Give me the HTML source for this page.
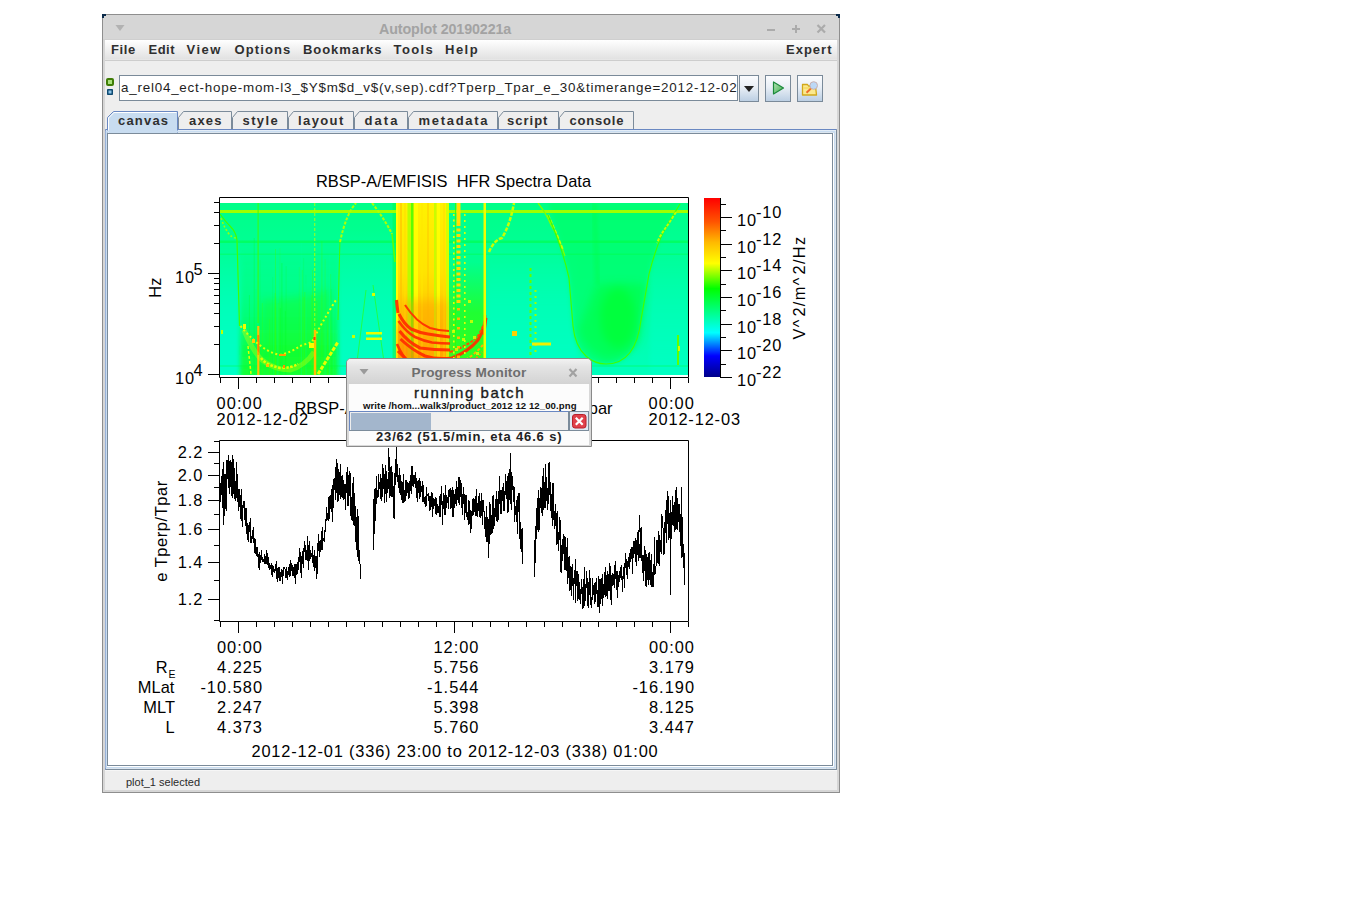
<!DOCTYPE html><html><head><meta charset="utf-8"><style>
*{box-sizing:border-box}
body{margin:0;width:1345px;height:916px;background:#fff;position:relative;overflow:hidden;font-family:"Liberation Sans",sans-serif}
.a{position:absolute}
.mt{position:absolute;top:40px;font-size:13px;font-weight:bold;color:#2f2f2f;line-height:19px;white-space:pre}
.tab{position:absolute;top:111px;height:19px}
.tt{position:absolute;top:113px;font-size:13px;font-weight:bold;color:#2f2f2f;line-height:16px;white-space:pre;text-align:center}
</style></head><body><div class="a" style="left:102px;top:14px;width:738px;height:779px;border:1px solid #8e8e8e;background:#d6d6d6"></div><div class="a" style="left:102px;top:14px;width:4px;height:2px;background:#0b2a4a"></div><div class="a" style="left:102px;top:14px;width:2px;height:4px;background:#0b2a4a"></div><div class="a" style="left:836px;top:14px;width:4px;height:2px;background:#0b2a4a"></div><div class="a" style="left:838px;top:14px;width:2px;height:4px;background:#0b2a4a"></div><div class="a" style="left:103px;top:39px;width:736px;height:1px;background:#cfcfcf"></div><div class="a" style="left:379px;top:20px;font-size:14.3px;font-weight:bold;color:#a3a3a3;letter-spacing:-0.12px;white-space:pre;line-height:18px">Autoplot 20190221a</div><svg class="a" style="left:0;top:0" width="1345" height="60"><path d="M115.5 25 L124.5 25 L120 31 Z" fill="#b2b2b2"/><rect x="767" y="29" width="8" height="2" fill="#ababab"/><rect x="792" y="28" width="8" height="2" fill="#ababab"/><rect x="795" y="25" width="2" height="8" fill="#ababab"/><path d="M817.5 25 L825 32.5 M825 25 L817.5 32.5" stroke="#ababab" stroke-width="2.2"/></svg><div class="a" style="left:105px;top:40px;width:732px;height:19px;background:linear-gradient(#ffffff,#f3f3f3 40%,#e2e2e2)"></div><div class="a" style="left:105px;top:59px;width:732px;height:1px;background:#e6e6e6"></div><div class="a" style="left:105px;top:60px;width:732px;height:1px;background:#cdcdcd"></div><div class="a" style="left:105px;top:61px;width:732px;height:729px;background:#eeeeee"></div><div class="mt" style="left:111px;letter-spacing:0.6px">File</div><div class="mt" style="left:148.5px;letter-spacing:0.5px">Edit</div><div class="mt" style="left:186.5px;letter-spacing:1.5px">View</div><div class="mt" style="left:234.5px;letter-spacing:1.1px">Options</div><div class="mt" style="left:303px;letter-spacing:0.95px">Bookmarks</div><div class="mt" style="left:393.5px;letter-spacing:1.4px">Tools</div><div class="mt" style="left:445px;letter-spacing:1.5px">Help</div><div class="mt" style="left:786px;letter-spacing:1.0px">Expert</div><svg class="a" style="left:0;top:60px" width="900" height="50"><rect x="106" y="18" width="8" height="8" rx="2" fill="#3f7d06"/><rect x="108" y="20" width="4" height="4" fill="#a8e07a"/><rect x="107" y="29" width="6" height="6" rx="0.8" fill="#0e4a72"/><rect x="108.5" y="30.5" width="3" height="3" fill="#8cc4e8"/></svg><div class="a" style="left:119px;top:75px;width:619px;height:26px;border:1px solid #7a8a99;background:#fff;overflow:hidden"><div class="a" style="left:1px;top:4px;font-size:13.4px;color:#1e1e1e;letter-spacing:0.78px;white-space:pre;line-height:16px">a_rel04_ect-hope-mom-l3_$Y$m$d_v$(v,sep).cdf?Tperp_Tpar_e_30&amp;timerange=2012-12-02</div></div><div class="a" style="left:739px;top:75px;width:20px;height:27px;border:1px solid #7a8a99;background:linear-gradient(#fbfcfe,#e9eff6 45%,#bccfe3)"></div><div class="a" style="left:765px;top:75px;width:26px;height:27px;border:1px solid #7a8a99;background:linear-gradient(#fbfcfe,#e9eff6 45%,#bccfe3)"></div><div class="a" style="left:797px;top:75px;width:26px;height:27px;border:1px solid #7a8a99;background:linear-gradient(#fbfcfe,#e9eff6 45%,#bccfe3)"></div><svg class="a" style="left:0;top:0" width="900" height="110"><path d="M744 86 L754 86 L749 92 Z" fill="#232323"/><defs><linearGradient id="pg" x1="0" y1="0" x2="1" y2="1"><stop offset="0" stop-color="#b8e8b8"/><stop offset="1" stop-color="#3aa84a"/></linearGradient></defs><path d="M773.5 82 L773.5 94 L783.5 88 Z" fill="url(#pg)" stroke="#1c8a3c" stroke-width="1.2" stroke-linejoin="round"/><path d="M802.5 84.5 L807.5 84.5 L808.5 86 L815.5 86 L816.5 95 L802.5 95 Z" fill="#fbe98e" stroke="#d2a81a" stroke-width="1.3" stroke-linejoin="round"/><path d="M803.5 88 L816 88" stroke="#f3d24a" stroke-width="1"/><circle cx="813.7" cy="85.5" r="3.8" fill="#bcd8f6" stroke="#c8b0b0" stroke-width="1"/><path d="M810.8 88.6 L806.5 92.8" stroke="#ee6a2a" stroke-width="2"/></svg><svg class="a" style="left:0;top:0" width="900" height="140"><path d="M107.5 133 L107.5 117.5 L113.5 111.5 L177.5 111.5 L177.5 133" fill="#c8dcf0" stroke="#6a88c2" stroke-width="1"/><path d="M108.5 133 L108.5 118 L114 112.5 L176.5 112.5" fill="none" stroke="#ffffff" stroke-width="1"/><path d="M178.5 129.5 L178.5 117.5 L183.5 111.5 L231.5 111.5 L231.5 129.5" fill="#eeeeee" stroke="#7b8b9a" stroke-width="1"/><path d="M232.5 129.5 L232.5 117.5 L237.5 111.5 L287.5 111.5 L287.5 129.5" fill="#eeeeee" stroke="#7b8b9a" stroke-width="1"/><path d="M288.5 129.5 L288.5 117.5 L293.5 111.5 L353.5 111.5 L353.5 129.5" fill="#eeeeee" stroke="#7b8b9a" stroke-width="1"/><path d="M354.5 129.5 L354.5 117.5 L359.5 111.5 L407.5 111.5 L407.5 129.5" fill="#eeeeee" stroke="#7b8b9a" stroke-width="1"/><path d="M408.5 129.5 L408.5 117.5 L413.5 111.5 L497.5 111.5 L497.5 129.5" fill="#eeeeee" stroke="#7b8b9a" stroke-width="1"/><path d="M498.5 129.5 L498.5 117.5 L503.5 111.5 L558.5 111.5 L558.5 129.5" fill="#eeeeee" stroke="#7b8b9a" stroke-width="1"/><path d="M559.5 129.5 L559.5 117.5 L564.5 111.5 L633.5 111.5 L633.5 129.5" fill="#eeeeee" stroke="#7b8b9a" stroke-width="1"/></svg><div class="tt" style="left:118px;letter-spacing:1.2px">canvas</div><div class="tt" style="left:189px;letter-spacing:1.2px">axes</div><div class="tt" style="left:242.5px;letter-spacing:1.4px">style</div><div class="tt" style="left:298px;letter-spacing:1.4px">layout</div><div class="tt" style="left:364.5px;letter-spacing:2.1px">data</div><div class="tt" style="left:418.5px;letter-spacing:1.7px">metadata</div><div class="tt" style="left:507px;letter-spacing:1.0px">script</div><div class="tt" style="left:569.5px;letter-spacing:0.8px">console</div><svg class="a" style="left:0;top:0" width="900" height="800"><path d="M177 129.5 L836.5 129.5 L836.5 769.5 L105.5 769.5 L105.5 129.5 L107 129.5" fill="none" stroke="#6a88c2" stroke-width="1"/><path d="M836.5 129.5 L836.5 769.5 L105.5 769.5" fill="none" stroke="#7b8b9a" stroke-width="1"/><rect x="106" y="130" width="730" height="639" fill="none"/><path d="M178 130.5 L835.5 130.5" stroke="#ffffff" stroke-width="1"/><rect x="106.5" y="131.5" width="728" height="636" fill="none" stroke="#c8dcf0" stroke-width="2"/><path d="M833.5 133 L833.5 766.5 L107 766.5" fill="none" stroke="#ffffff" stroke-width="1"/><rect x="107.5" y="133.5" width="725" height="632" fill="#ffffff" stroke="#7b8b9a" stroke-width="1"/></svg><div class="a" style="left:105px;top:770px;width:732px;height:1px;background:#f6f6f6"></div><div class="a" style="left:126px;top:776px;font-size:11px;color:#2a2a2a;white-space:pre;line-height:13px">plot_1 selected</div><svg class="a" style="left:0;top:0" width="1345" height="916" font-family="&quot;Liberation Sans&quot;, sans-serif"><rect x="108" y="134" width="724" height="631" fill="#fff"/><text x="453.5" y="187" font-size="16.4" text-anchor="middle" letter-spacing="0.03" >RBSP-A/EMFISIS&#160; HFR Spectra Data</text><defs><clipPath id="spc"><rect x="220" y="203" width="468" height="172"/></clipPath><linearGradient id="base" x1="0" y1="0" x2="0" y2="1"><stop offset="0" stop-color="#00ff88"/><stop offset="0.45" stop-color="#00ff9e"/><stop offset="1" stop-color="#00ffbc"/></linearGradient><linearGradient id="ugreen" x1="0" y1="0" x2="0" y2="1"><stop offset="0" stop-color="#00ff50" stop-opacity="0"/><stop offset="0.4" stop-color="#00ff40" stop-opacity="0.35"/><stop offset="0.8" stop-color="#10ff10" stop-opacity="0.85"/><stop offset="1" stop-color="#20ff00" stop-opacity="0.95"/></linearGradient><linearGradient id="u2green" x1="0" y1="0" x2="0" y2="1"><stop offset="0" stop-color="#00ff50" stop-opacity="0"/><stop offset="0.35" stop-color="#00ff40" stop-opacity="0.7"/><stop offset="0.7" stop-color="#00ff20" stop-opacity="1"/><stop offset="1" stop-color="#00ff40" stop-opacity="0.6"/></linearGradient><linearGradient id="band" x1="0" y1="0" x2="0" y2="1"><stop offset="0" stop-color="#fff200"/><stop offset="0.4" stop-color="#ffe400"/><stop offset="0.7" stop-color="#ffc400"/><stop offset="1" stop-color="#ffa400"/></linearGradient><linearGradient id="cyanlow" x1="0" y1="0" x2="0" y2="1"><stop offset="0" stop-color="#00ffc0" stop-opacity="0"/><stop offset="0.5" stop-color="#00ffc0" stop-opacity="0.8"/><stop offset="1" stop-color="#00ffc8" stop-opacity="1"/></linearGradient><filter id="b2" x="-30%" y="-30%" width="160%" height="160%"><feGaussianBlur stdDeviation="2"/></filter><filter id="b4" x="-30%" y="-30%" width="160%" height="160%"><feGaussianBlur stdDeviation="4"/></filter><filter id="b1" x="-30%" y="-30%" width="160%" height="160%"><feGaussianBlur stdDeviation="0.6"/></filter></defs><g clip-path="url(#spc)"><rect x="220" y="203" width="468" height="172" fill="url(#base)"/><rect x="218" y="250" width="24" height="130" fill="url(#cyanlow)" filter="url(#b2)"/><rect x="340" y="230" width="56" height="150" fill="url(#cyanlow)" opacity="0.75"/><rect x="487" y="240" width="90" height="140" fill="url(#cyanlow)" opacity="0.8" filter="url(#b2)"/><rect x="650" y="250" width="38" height="130" fill="url(#cyanlow)" opacity="0.7" filter="url(#b2)"/><path d="M240 240 L240 378 L338 378 L338 240 Z" fill="url(#ugreen)" opacity="0.75" filter="url(#b2)"/><path d="M262 300 Q290 300 330 290 L330 370 Q290 372 262 370 Z" fill="#20ff00" opacity="0.3" filter="url(#b4)"/><rect x="279.4" y="248" width="1" height="127" fill="#40ff00" opacity="0.16"/><rect x="253.7" y="238" width="1" height="137" fill="#00ff20" opacity="0.30"/><rect x="330.1" y="274" width="1" height="101" fill="#40ff00" opacity="0.23"/><rect x="316.3" y="301" width="1" height="74" fill="#40ff00" opacity="0.33"/><rect x="255.5" y="289" width="1" height="86" fill="#00ff60" opacity="0.33"/><rect x="248.9" y="295" width="1" height="80" fill="#00ff20" opacity="0.29"/><rect x="285.6" y="266" width="1" height="109" fill="#00ff20" opacity="0.19"/><rect x="281.4" y="263" width="1" height="112" fill="#00ff20" opacity="0.35"/><rect x="284.9" y="311" width="1" height="64" fill="#00ff20" opacity="0.27"/><rect x="275.0" y="249" width="1" height="126" fill="#40ff00" opacity="0.35"/><rect x="312.0" y="270" width="1" height="105" fill="#40ff00" opacity="0.35"/><rect x="330.7" y="289" width="1" height="86" fill="#00ff20" opacity="0.13"/><rect x="257.3" y="292" width="1" height="83" fill="#00ffa0" opacity="0.22"/><rect x="301.0" y="243" width="1" height="132" fill="#00ffa0" opacity="0.27"/><rect x="272.3" y="277" width="1" height="98" fill="#00ff20" opacity="0.17"/><rect x="301.8" y="270" width="1" height="105" fill="#40ff00" opacity="0.26"/><rect x="274.6" y="293" width="1" height="82" fill="#40ff00" opacity="0.35"/><rect x="311.2" y="295" width="1" height="80" fill="#40ff00" opacity="0.31"/><rect x="298.8" y="267" width="1" height="108" fill="#40ff00" opacity="0.14"/><rect x="269.1" y="319" width="1" height="56" fill="#40ff00" opacity="0.22"/><rect x="324.6" y="259" width="1" height="116" fill="#40ff00" opacity="0.24"/><rect x="321.4" y="241" width="1" height="134" fill="#40ff00" opacity="0.33"/><rect x="305.4" y="275" width="1" height="100" fill="#00ff20" opacity="0.12"/><rect x="273.1" y="264" width="1" height="111" fill="#00ffa0" opacity="0.20"/><rect x="277.7" y="303" width="1" height="72" fill="#40ff00" opacity="0.25"/><rect x="324.6" y="313" width="1" height="62" fill="#00ffa0" opacity="0.30"/><rect x="314.2" y="251" width="1" height="124" fill="#40ff00" opacity="0.33"/><rect x="303.1" y="258" width="1" height="117" fill="#00ff60" opacity="0.34"/><rect x="261.8" y="303" width="1" height="72" fill="#40ff00" opacity="0.29"/><rect x="277.4" y="269" width="1" height="106" fill="#00ffa0" opacity="0.36"/><rect x="281.0" y="312" width="1" height="63" fill="#00ff60" opacity="0.14"/><rect x="327.2" y="309" width="1" height="66" fill="#40ff00" opacity="0.32"/><rect x="329.3" y="253" width="1" height="122" fill="#00ffa0" opacity="0.34"/><rect x="333.0" y="304" width="1" height="71" fill="#00ffa0" opacity="0.16"/><rect x="305.4" y="284" width="1" height="91" fill="#00ffa0" opacity="0.37"/><rect x="259.5" y="260" width="1" height="115" fill="#00ff20" opacity="0.17"/><rect x="304.4" y="292" width="1" height="83" fill="#40ff00" opacity="0.36"/><rect x="325.7" y="290" width="1" height="85" fill="#00ff60" opacity="0.32"/><rect x="303.4" y="297" width="1" height="78" fill="#40ff00" opacity="0.34"/><rect x="279.8" y="308" width="1" height="67" fill="#00ff20" opacity="0.28"/><path d="M548 203 Q563 250 569 278 L573 326 C576 356 594 364 606 364 C622 364 637 354 641 320 L649 274 Q657 243 666 227 L680 203 Z" fill="#00ff6a" opacity="0.75" filter="url(#b2)"/><path d="M596 285 Q620 280 646 285 L640 340 Q630 358 606 360 Q585 352 578 330 Z" fill="#00ff30" opacity="0.45" filter="url(#b4)"/><ellipse cx="618" cy="318" rx="18" ry="30" fill="#00ff00" opacity="0.3" filter="url(#b4)"/><path d="M594 203 L598 285" stroke="#00ff50" stroke-width="5" opacity="0.6" filter="url(#b2)"/><linearGradient id="gr2" x1="0" y1="0" x2="0" y2="1"><stop offset="0" stop-color="#30ff00" stop-opacity="0"/><stop offset="0.45" stop-color="#30ff00" stop-opacity="0.65"/><stop offset="1" stop-color="#40ff00" stop-opacity="0.8"/></linearGradient><rect x="449" y="203" width="36" height="172" fill="#00ff90"/><rect x="449" y="262" width="36" height="113" fill="url(#gr2)"/><rect x="392.5" y="203" width="3.5" height="172" fill="#00ff50" opacity="0.6"/><rect x="220" y="210" width="468" height="3" fill="#a0ff00"/><rect x="220" y="240.5" width="468" height="2.5" fill="#00ff40" opacity="0.55"/><rect x="220" y="253.5" width="468" height="1.5" fill="#00ff40" opacity="0.35"/><rect x="220" y="365" width="468" height="2" fill="#00ff40" opacity="0.25"/><rect x="396" y="203" width="53" height="172" fill="url(#band)"/><rect x="396" y="203" width="2" height="172" fill="#ffff00" opacity="1"/><rect x="400" y="203" width="2" height="172" fill="#ffc000" opacity="0.6"/><rect x="404" y="203" width="2" height="172" fill="#ffe000" opacity="0.6"/><rect x="407.5" y="203" width="3.5" height="172" fill="#b0ff00" opacity="0.85"/><rect x="411" y="203" width="2.5" height="172" fill="#40ff00" opacity="0.85"/><rect x="414" y="203" width="4" height="172" fill="#ffff00" opacity="0.9"/><rect x="421" y="203" width="2" height="172" fill="#ffe800" opacity="0.5"/><rect x="427" y="203" width="2" height="172" fill="#ffc000" opacity="0.4"/><rect x="434" y="203" width="2.5" height="172" fill="#c0ff00" opacity="0.85"/><rect x="437" y="203" width="3" height="172" fill="#ffff00" opacity="0.9"/><rect x="443" y="203" width="2" height="172" fill="#ffe000" opacity="0.6"/><rect x="446" y="203" width="3" height="172" fill="#d0ff00" opacity="0.9"/><rect x="402" y="300" width="46" height="80" fill="#ff9a00" opacity="0.4" filter="url(#b4)"/><path d="M397 320 Q405 345 425 360 Q440 372 450 375 L397 375 Z" fill="#ff8a00" opacity="0.55" filter="url(#b2)"/><path d="M405 305 Q416 322 430 328 Q440 331 449 331" fill="none" stroke="#ff3000" stroke-width="2.1" opacity="0.95"/><path d="M396.5 300 Q397 306 398 313" fill="none" stroke="#ff3000" stroke-width="3.1" opacity="0.95"/><path d="M399 314 Q404 324 411 329 Q420 333 428 334 Q440 336 450 337" fill="none" stroke="#ff3000" stroke-width="3.1" opacity="0.95"/><path d="M398.5 321 Q406 332 415 337 Q424 341 432 342.5 Q442 343.5 450 343.5" fill="none" stroke="#ff3000" stroke-width="2.6" opacity="0.95"/><path d="M399.5 331 Q408 342 420 348 Q434 350 450 350" fill="none" stroke="#ff3000" stroke-width="3.1" opacity="0.95"/><path d="M400.5 339 Q412 350 425 356 Q437 360 452 358 Q468 352 478 340 Q484 330 486 318" fill="none" stroke="#ff3000" stroke-width="3.1" opacity="0.95"/><path d="M398 351 Q406 360 415 366 Q425 372 440 373" fill="none" stroke="#ff3000" stroke-width="3.1" opacity="0.95"/><path d="M402 364 Q410 372 418 376" fill="none" stroke="#ff3000" stroke-width="2.6" opacity="0.95"/><path d="M397 344 Q402 356 410 364 Q420 372 432 376" fill="none" stroke="#ff3000" stroke-width="2.6" opacity="0.95"/><path d="M420 366 Q436 368 452 366" fill="none" stroke="#ff3000" stroke-width="2.6" opacity="0.95"/><path d="M485 315 Q486 325 484 335" fill="none" stroke="#ff4000" stroke-width="2.5"/><path d="M450 352 Q468 346 478 336 Q484 326 486 316" fill="none" stroke="#ff5000" stroke-width="2" stroke-dasharray="3 1.5"/><path d="M452 372 Q470 366 482 352" fill="none" stroke="#ff9000" stroke-width="2" stroke-dasharray="2 2"/><path d="M452 366 Q470 360 483 345" fill="none" stroke="#ffb000" stroke-width="2" stroke-dasharray="3 2"/><path d="M453.8 214 L453.8 372" stroke="#e8ff00" stroke-width="1.6" stroke-dasharray="2 3.5"/><rect x="455" y="203" width="1" height="172" fill="#30ff00" opacity="0.8"/><rect x="456.5" y="203" width="4" height="20" fill="#ffe000"/><path d="M458.5 223 L458.5 305" stroke="#ffd800" stroke-width="4" stroke-dasharray="3 2.5"/><path d="M458.5 308 L458.5 372" stroke="#ffb800" stroke-width="3" stroke-dasharray="2.5 7"/><path d="M464.8 214 L464.8 360" stroke="#e0ff00" stroke-width="1.6" stroke-dasharray="2 4"/><rect x="452" y="330" width="3" height="3" fill="#e0ff00" opacity="0.8"/><rect x="470" y="320" width="3" height="3" fill="#e0ff00" opacity="0.8"/><rect x="462" y="338" width="3" height="3" fill="#e0ff00" opacity="0.8"/><rect x="476" y="352" width="3" height="3" fill="#e0ff00" opacity="0.8"/><rect x="455" y="348" width="3" height="3" fill="#e0ff00" opacity="0.8"/><rect x="468" y="300" width="3" height="3" fill="#e0ff00" opacity="0.8"/><rect x="473" y="336" width="3" height="3" fill="#e0ff00" opacity="0.8"/><rect x="481" y="362" width="3" height="3" fill="#e0ff00" opacity="0.8"/><rect x="483.5" y="203" width="2.5" height="172" fill="#f0ff00"/><path d="M314.7 203 L314.7 375" stroke="#c0ff00" stroke-width="1.2" stroke-dasharray="3 2" opacity="0.7"/><rect x="257.5" y="203" width="1.2" height="120" fill="#40ff00" opacity="0.8"/><path d="M258.3 326 L258.3 375" stroke="#ffc000" stroke-width="2.2"/><path d="M258.3 335 L258.3 355" stroke="#ff8000" stroke-width="2"/><path d="M220 214 Q226 222 230 226 Q236 232 237 240 Q238 280 239.5 326" fill="none" stroke="#40ff00" stroke-width="1.2"/><path d="M221 218 Q228 238 236 238" fill="none" stroke="#a0ff00" stroke-width="1.5" stroke-dasharray="2 2"/><path d="M338 320 Q339 270 340 240" fill="none" stroke="#40ff00" stroke-width="1.0"/><path d="M340 242 Q346 214 356 203" fill="none" stroke="#b0ff00" stroke-width="2" stroke-dasharray="3 1.5"/><path d="M372 203 Q384 218 392 234" fill="none" stroke="#b0ff00" stroke-width="2" stroke-dasharray="3 1.5"/><path d="M392 234 L395 262" fill="none" stroke="#60ff00" stroke-width="1.5"/><path d="M489 252 Q494 240 502 238 Q510 225 514 203" fill="none" stroke="#c8ff00" stroke-width="2.5" stroke-dasharray="4 1.5"/><path d="M538 203 Q546 213 551 225 Q560 240 565 256" fill="none" stroke="#80ff00" stroke-width="1.3"/><path d="M548 215 Q556 232 563 250" fill="none" stroke="#c8ff00" stroke-width="2" stroke-dasharray="4 1.5"/><path d="M548 215 Q563 250 569 278 L573 326 C576 356 594 364 606 364 C622 364 637 354 641 320 L649 274 Q657 243 666 227 L680 204" fill="none" stroke="#40ff00" stroke-width="1.2"/><path d="M676 212 Q670 222 664 230 Q660 236 657 243" fill="none" stroke="#c0ff00" stroke-width="2" stroke-dasharray="3 1.5"/><path d="M240.5 326 Q247 334 254 340 Q266 352 280 355 Q292 352 300 346 Q306 344 312 342 Q322 322 336 300" fill="none" stroke="#e0ff00" stroke-width="2" stroke-dasharray="2 2.5"/><path d="M261 358 Q266 365 280 368 Q292 368 298 364" fill="none" stroke="#e8ff00" stroke-width="2.5" stroke-dasharray="2.5 1.5"/><path d="M244 330 Q252 350 262 360 Q275 370 290 370 Q305 366 314 352" fill="none" stroke="#d8ff00" stroke-width="5" opacity="0.35" filter="url(#b1)"/><path d="M248 346 L251 374" fill="none" stroke="#e0ff00" stroke-width="1.5" stroke-dasharray="3 2"/><path d="M315 330 L315 375" stroke="#ffc000" stroke-width="2.5"/><path d="M318 374 Q328 358 338 342" fill="none" stroke="#e8ff00" stroke-width="3" stroke-dasharray="4 1.5"/><path d="M366 290 L357 362 M373 285 L384 362" stroke="#30ff00" stroke-width="1" fill="none" opacity="0.6"/><path d="M530.5 268 L530.5 356" stroke="#60ff00" stroke-width="2" stroke-dasharray="3 3"/><path d="M535.5 290 L535.5 356" stroke="#a0ff00" stroke-width="2" stroke-dasharray="2 4"/><rect x="372" y="293" width="3" height="3" fill="#d8ff00"/><rect x="366" y="332" width="16" height="2.5" fill="#e8ff00"/><rect x="366" y="337.5" width="16" height="2.5" fill="#e8ff00"/><rect x="352" y="335" width="3" height="3" fill="#c8ff00"/><rect x="512" y="331" width="5" height="5" fill="#ffd000"/><rect x="532" y="342.5" width="19" height="3" fill="#f0f000"/><rect x="677" y="335" width="2" height="30" fill="#60ff00"/><rect x="678" y="346" width="2" height="5" fill="#d0ff00"/><rect x="309" y="343" width="5" height="5" fill="#f8ff00"/><rect x="313.5" y="337" width="2" height="3" fill="#ff4000"/><rect x="279" y="354" width="7" height="2" fill="#ffa000"/><rect x="266" y="364" width="3" height="3" fill="#ffc000"/><rect x="221" y="330" width="2" height="4" fill="#c0ff00"/><rect x="243" y="324" width="3" height="5" fill="#f0ff00"/><rect x="252" y="339" width="3" height="4" fill="#ffd000"/><rect x="283" y="365" width="2" height="3" fill="#ff9000"/></g><path d="M219.5 197.5 L688.5 197.5 L688.5 377.5 L219.5 377.5 Z" fill="none" stroke="#000" stroke-width="1"/><path d="M220.5 378 L220.5 383" stroke="#000" stroke-width="1"/><path d="M238.5 378 L238.5 389" stroke="#000" stroke-width="1"/><path d="M256.5 378 L256.5 383" stroke="#000" stroke-width="1"/><path d="M274.5 378 L274.5 383" stroke="#000" stroke-width="1"/><path d="M292.5 378 L292.5 383" stroke="#000" stroke-width="1"/><path d="M310.5 378 L310.5 383" stroke="#000" stroke-width="1"/><path d="M328.5 378 L328.5 383" stroke="#000" stroke-width="1"/><path d="M346.5 378 L346.5 383" stroke="#000" stroke-width="1"/><path d="M364.5 378 L364.5 383" stroke="#000" stroke-width="1"/><path d="M382.5 378 L382.5 383" stroke="#000" stroke-width="1"/><path d="M400.5 378 L400.5 383" stroke="#000" stroke-width="1"/><path d="M418.5 378 L418.5 383" stroke="#000" stroke-width="1"/><path d="M436.5 378 L436.5 383" stroke="#000" stroke-width="1"/><path d="M454.5 378 L454.5 389" stroke="#000" stroke-width="1"/><path d="M472.5 378 L472.5 383" stroke="#000" stroke-width="1"/><path d="M490.5 378 L490.5 383" stroke="#000" stroke-width="1"/><path d="M508.5 378 L508.5 383" stroke="#000" stroke-width="1"/><path d="M526.5 378 L526.5 383" stroke="#000" stroke-width="1"/><path d="M544.5 378 L544.5 383" stroke="#000" stroke-width="1"/><path d="M562.5 378 L562.5 383" stroke="#000" stroke-width="1"/><path d="M580.5 378 L580.5 383" stroke="#000" stroke-width="1"/><path d="M598.5 378 L598.5 383" stroke="#000" stroke-width="1"/><path d="M616.5 378 L616.5 383" stroke="#000" stroke-width="1"/><path d="M634.5 378 L634.5 383" stroke="#000" stroke-width="1"/><path d="M652.5 378 L652.5 383" stroke="#000" stroke-width="1"/><path d="M670.5 378 L670.5 389" stroke="#000" stroke-width="1"/><path d="M688.5 378 L688.5 383" stroke="#000" stroke-width="1"/><path d="M208 374.5 L219 374.5" stroke="#000" stroke-width="1"/><path d="M214 344.5 L219 344.5" stroke="#000" stroke-width="1"/><path d="M214 326.5 L219 326.5" stroke="#000" stroke-width="1"/><path d="M214 313.5 L219 313.5" stroke="#000" stroke-width="1"/><path d="M214 303.5 L219 303.5" stroke="#000" stroke-width="1"/><path d="M214 295.5 L219 295.5" stroke="#000" stroke-width="1"/><path d="M214 289.5 L219 289.5" stroke="#000" stroke-width="1"/><path d="M214 283.5 L219 283.5" stroke="#000" stroke-width="1"/><path d="M214 278.5 L219 278.5" stroke="#000" stroke-width="1"/><path d="M208 273.5 L219 273.5" stroke="#000" stroke-width="1"/><path d="M214 243.5 L219 243.5" stroke="#000" stroke-width="1"/><path d="M214 225.5 L219 225.5" stroke="#000" stroke-width="1"/><path d="M214 212.5 L219 212.5" stroke="#000" stroke-width="1"/><path d="M214 202.5 L219 202.5" stroke="#000" stroke-width="1"/><text x="175" y="282.6" font-size="16.4" text-anchor="start" letter-spacing="0.8" >10</text><text x="193.5" y="274.5" font-size="16.4" text-anchor="start" letter-spacing="0" >5</text><text x="175" y="383.6" font-size="16.4" text-anchor="start" letter-spacing="0.8" >10</text><text x="193.5" y="375.5" font-size="16.4" text-anchor="start" letter-spacing="0" >4</text><text x="0" y="0" font-size="16.4" text-anchor="middle" letter-spacing="0.2" transform="translate(161,287.5) rotate(-90)">Hz</text><text x="216.5" y="408.6" font-size="16.4" text-anchor="start" letter-spacing="1.1" >00:00</text><text x="216.5" y="424.6" font-size="16.4" text-anchor="start" letter-spacing="0.85" >2012-12-02</text><text x="648.5" y="408.6" font-size="16.4" text-anchor="start" letter-spacing="1.1" >00:00</text><text x="648.5" y="424.6" font-size="16.4" text-anchor="start" letter-spacing="0.85" >2012-12-03</text><defs><linearGradient id="cw" x1="0" y1="1" x2="0" y2="0"><stop offset="0" stop-color="#000089"/><stop offset="0.1176" stop-color="#0000ff"/><stop offset="0.247" stop-color="#00ffff"/><stop offset="0.494" stop-color="#00ff00"/><stop offset="0.635" stop-color="#ffff00"/><stop offset="0.753" stop-color="#ffb900"/><stop offset="0.867" stop-color="#ff5400"/><stop offset="1" stop-color="#ff0000"/></linearGradient></defs><rect x="704" y="198" width="16" height="179" fill="url(#cw)"/><path d="M720.5 198 L720.5 378" stroke="#000" stroke-width="1"/><path d="M721 204.5 L726 204.5" stroke="#000" stroke-width="1"/><path d="M721 217.5 L732 217.5" stroke="#000" stroke-width="1"/><text x="737" y="226.4" font-size="16.4" text-anchor="start" letter-spacing="0.8" >10</text><text x="756" y="218.4" font-size="16.4" text-anchor="start" letter-spacing="0.9" >-10</text><path d="M721 230.5 L726 230.5" stroke="#000" stroke-width="1"/><path d="M721 244.5 L732 244.5" stroke="#000" stroke-width="1"/><text x="737" y="253.4" font-size="16.4" text-anchor="start" letter-spacing="0.8" >10</text><text x="756" y="245.4" font-size="16.4" text-anchor="start" letter-spacing="0.9" >-12</text><path d="M721 257.5 L726 257.5" stroke="#000" stroke-width="1"/><path d="M721 270.5 L732 270.5" stroke="#000" stroke-width="1"/><text x="737" y="279.4" font-size="16.4" text-anchor="start" letter-spacing="0.8" >10</text><text x="756" y="271.4" font-size="16.4" text-anchor="start" letter-spacing="0.9" >-14</text><path d="M721 284.5 L726 284.5" stroke="#000" stroke-width="1"/><path d="M721 297.5 L732 297.5" stroke="#000" stroke-width="1"/><text x="737" y="306.4" font-size="16.4" text-anchor="start" letter-spacing="0.8" >10</text><text x="756" y="298.4" font-size="16.4" text-anchor="start" letter-spacing="0.9" >-16</text><path d="M721 310.5 L726 310.5" stroke="#000" stroke-width="1"/><path d="M721 324.5 L732 324.5" stroke="#000" stroke-width="1"/><text x="737" y="333.4" font-size="16.4" text-anchor="start" letter-spacing="0.8" >10</text><text x="756" y="325.4" font-size="16.4" text-anchor="start" letter-spacing="0.9" >-18</text><path d="M721 337.5 L726 337.5" stroke="#000" stroke-width="1"/><path d="M721 350.5 L732 350.5" stroke="#000" stroke-width="1"/><text x="737" y="359.4" font-size="16.4" text-anchor="start" letter-spacing="0.8" >10</text><text x="756" y="351.4" font-size="16.4" text-anchor="start" letter-spacing="0.9" >-20</text><path d="M721 364.5 L726 364.5" stroke="#000" stroke-width="1"/><path d="M721 377.5 L732 377.5" stroke="#000" stroke-width="1"/><text x="737" y="386.4" font-size="16.4" text-anchor="start" letter-spacing="0.8" >10</text><text x="756" y="378.4" font-size="16.4" text-anchor="start" letter-spacing="0.9" >-22</text><text x="0" y="0" font-size="16.4" text-anchor="middle" letter-spacing="1.35" transform="translate(805,287.5) rotate(-90)">V<tspan letter-spacing="3">^</tspan>2/m<tspan letter-spacing="3">^</tspan>2/Hz</text><text x="453.5" y="413.8" font-size="16.4" text-anchor="middle" letter-spacing="0.07" >RBSP-A/ECT-HOPE L3 MOM  e Tperp/Tpar</text><path d="M219.5 544.0 L219.8 479.0 L219.5 478.1 L219.8 496.5 L220.1 488.2 L220.4 484.9 L220.7 501.6 L221.0 483.4 L221.3 493.9 L221.6 475.7 L221.9 494.9 L222.2 477.4 L222.5 479.4 L222.8 468.7 L223.1 525.2 L223.4 510.7 L223.7 461.8 L224.0 471.1 L224.3 515.8 L224.6 506.2 L224.9 493.3 L225.2 509.1 L225.5 475.6 L225.8 474.1 L226.1 491.6 L226.4 492.6 L226.7 511.0 L227.0 460.2 L227.3 461.2 L227.6 477.8 L227.9 478.9 L228.2 455.9 L228.5 455.1 L228.8 476.3 L229.1 493.7 L229.4 461.2 L229.7 472.6 L230.0 476.2 L230.3 466.1 L230.6 486.6 L230.9 460.1 L231.2 495.9 L231.5 462.7 L231.8 476.9 L232.1 455.6 L232.4 498.2 L232.7 489.4 L233.0 465.7 L233.3 459.4 L233.6 475.4 L233.9 494.1 L234.2 474.4 L234.5 467.9 L234.8 494.3 L235.1 501.0 L235.4 480.7 L235.7 491.0 L236.0 491.6 L236.3 497.7 L236.6 477.8 L236.9 474.5 L237.2 501.9 L237.5 474.4 L237.8 475.1 L238.1 495.6 L238.4 505.2 L238.7 510.8 L239.0 489.0 L239.3 493.6 L239.6 503.6 L239.9 500.4 L240.2 518.8 L240.5 517.5 L240.8 508.2 L241.1 489.0 L241.4 495.6 L241.7 496.6 L242.0 521.0 L242.3 520.0 L242.6 527.4 L242.9 508.4 L243.2 501.0 L243.5 507.8 L243.8 503.5 L244.1 501.3 L244.4 512.6 L244.7 509.4 L245.0 519.6 L245.3 519.3 L245.6 525.6 L245.9 507.6 L246.2 521.4 L246.5 533.8 L246.8 507.8 L247.1 530.2 L247.4 524.1 L247.7 523.0 L248.0 539.7 L248.3 530.8 L248.6 541.7 L248.9 526.4 L249.2 526.9 L249.5 531.9 L249.8 522.7 L250.1 521.6 L250.4 518.5 L250.7 532.6 L251.0 542.7 L251.3 540.9 L251.6 536.5 L251.9 540.2 L252.2 530.2 L252.5 539.3 L252.8 532.5 L253.1 538.3 L253.4 543.2 L253.7 527.2 L254.0 537.1 L254.3 552.5 L254.6 541.3 L254.9 547.9 L255.2 548.6 L255.5 554.4 L255.8 539.1 L256.1 556.0 L256.4 547.8 L256.7 549.2 L257.0 547.2 L257.3 553.6 L257.6 557.1 L257.9 552.5 L258.2 557.5 L258.5 558.3 L258.8 560.5 L259.1 570.2 L259.4 554.6 L259.7 552.1 L260.0 554.8 L260.3 555.3 L260.6 563.1 L260.9 559.7 L261.2 550.2 L261.5 560.4 L261.8 555.8 L262.1 557.3 L262.4 557.4 L262.7 562.1 L263.0 559.9 L263.3 558.9 L263.6 561.1 L263.9 561.8 L264.2 553.9 L264.5 561.8 L264.8 563.6 L265.1 556.2 L265.4 557.6 L265.7 558.0 L266.0 563.5 L266.3 562.3 L266.6 556.0 L266.9 550.0 L267.2 556.8 L267.5 559.8 L267.8 561.8 L268.1 566.0 L268.4 556.9 L268.7 564.1 L269.0 568.4 L269.3 569.9 L269.6 562.6 L269.9 565.9 L270.2 565.9 L270.5 565.6 L270.8 569.0 L271.1 564.8 L271.4 564.3 L271.7 574.6 L272.0 569.6 L272.3 576.6 L272.6 564.6 L272.9 568.6 L273.2 566.7 L273.5 567.5 L273.8 571.6 L274.1 572.8 L274.4 569.1 L274.7 572.7 L275.0 570.8 L275.3 568.3 L275.6 568.9 L275.9 564.5 L276.2 568.9 L276.5 578.5 L276.8 561.3 L277.1 579.4 L277.4 567.6 L277.7 582.2 L278.0 568.4 L278.3 573.4 L278.6 578.1 L278.9 567.5 L279.2 567.6 L279.5 568.6 L279.8 580.7 L280.1 574.8 L280.4 571.9 L280.7 580.7 L281.0 577.7 L281.3 573.6 L281.6 570.8 L281.9 569.3 L282.2 570.6 L282.5 571.0 L282.8 584.3 L283.1 572.0 L283.4 568.2 L283.7 573.0 L284.0 567.6 L284.3 568.0 L284.6 568.5 L284.9 567.0 L285.2 571.7 L285.5 573.1 L285.8 578.2 L286.1 567.3 L286.4 569.2 L286.7 570.0 L287.0 578.2 L287.3 575.8 L287.6 570.6 L287.9 580.1 L288.2 566.8 L288.5 572.8 L288.8 571.7 L289.1 576.8 L289.4 564.5 L289.7 565.0 L290.0 566.5 L290.3 574.9 L290.6 560.4 L290.9 576.2 L291.2 562.6 L291.5 564.2 L291.8 568.4 L292.1 564.8 L292.4 570.4 L292.7 574.8 L293.0 576.3 L293.3 567.0 L293.6 569.9 L293.9 574.3 L294.2 578.4 L294.5 564.4 L294.8 577.8 L295.1 564.2 L295.4 571.3 L295.7 583.7 L296.0 570.6 L296.3 575.3 L296.6 564.1 L296.9 564.9 L297.2 573.7 L297.5 562.5 L297.8 568.0 L298.1 565.6 L298.4 557.4 L298.7 570.4 L299.0 556.6 L299.3 560.4 L299.6 547.7 L299.9 561.7 L300.2 552.1 L300.5 553.9 L300.8 562.6 L301.1 577.5 L301.4 556.0 L301.7 558.7 L302.0 556.5 L302.3 551.4 L302.6 563.5 L302.9 552.2 L303.2 563.4 L303.5 567.5 L303.8 549.2 L304.1 549.6 L304.4 541.4 L304.7 551.0 L305.0 551.5 L305.3 545.0 L305.6 559.5 L305.9 551.6 L306.2 550.2 L306.5 559.6 L306.8 558.1 L307.1 560.8 L307.4 536.4 L307.7 554.3 L308.0 545.2 L308.3 570.1 L308.6 545.4 L308.9 548.1 L309.2 559.0 L309.5 561.4 L309.8 541.4 L310.1 553.7 L310.4 559.4 L310.7 558.0 L311.0 557.5 L311.3 552.9 L311.6 554.4 L311.9 557.1 L312.2 546.2 L312.5 547.2 L312.8 552.2 L313.1 567.4 L313.4 560.6 L313.7 555.0 L314.0 556.8 L314.3 561.9 L314.6 549.9 L314.9 571.3 L315.2 556.3 L315.5 560.8 L315.8 567.6 L316.1 555.8 L316.4 568.7 L316.7 568.8 L317.0 562.3 L317.3 573.5 L317.6 543.4 L317.9 545.9 L318.2 549.5 L318.5 550.9 L318.8 533.9 L319.1 544.4 L319.4 556.1 L319.7 555.7 L320.0 546.9 L320.3 549.4 L320.6 540.5 L320.9 551.8 L321.2 531.5 L321.5 538.0 L321.8 548.9 L322.1 549.9 L322.4 527.4 L322.7 539.8 L323.0 538.9 L323.3 537.6 L323.6 541.2 L323.9 539.6 L324.2 539.1 L324.5 530.3 L324.8 541.6 L325.1 528.7 L325.4 523.3 L325.7 519.2 L326.0 522.2 L326.3 506.8 L326.6 512.9 L326.9 516.2 L327.2 519.9 L327.5 517.0 L327.8 512.6 L328.1 516.6 L328.4 517.1 L328.7 496.7 L329.0 520.5 L329.3 502.5 L329.6 495.6 L329.9 514.7 L330.2 499.8 L330.5 495.9 L330.8 496.2 L331.1 512.3 L331.4 498.6 L331.7 489.4 L332.0 490.9 L332.3 522.1 L332.6 494.7 L332.9 484.7 L333.2 508.2 L333.5 480.3 L333.8 480.0 L334.1 478.3 L334.4 483.0 L334.7 484.2 L335.0 489.9 L335.3 467.3 L335.6 490.2 L335.9 499.8 L336.2 467.2 L336.5 463.6 L336.8 492.5 L337.1 492.8 L337.4 462.6 L337.7 465.0 L338.0 501.8 L338.3 487.5 L338.6 468.7 L338.9 469.5 L339.2 476.8 L339.5 481.9 L339.8 486.3 L340.1 498.3 L340.4 479.3 L340.7 464.0 L341.0 499.2 L341.3 475.9 L341.6 496.4 L341.9 477.7 L342.2 482.5 L342.5 497.7 L342.8 475.4 L343.1 490.8 L343.4 497.7 L343.7 480.5 L344.0 499.6 L344.3 488.0 L344.6 484.1 L344.9 496.9 L345.2 483.8 L345.5 491.7 L345.8 509.9 L346.1 477.7 L346.4 471.7 L346.7 492.7 L347.0 490.1 L347.3 467.3 L347.6 495.2 L347.9 506.4 L348.2 504.3 L348.5 475.0 L348.8 481.3 L349.1 474.8 L349.4 473.7 L349.7 470.9 L350.0 495.6 L350.3 473.5 L350.6 493.2 L350.9 515.7 L351.2 511.3 L351.5 503.9 L351.8 499.5 L352.1 513.5 L352.4 518.3 L352.7 482.9 L353.0 521.0 L353.3 477.2 L353.6 524.5 L353.9 519.9 L354.2 502.4 L354.5 516.2 L354.8 492.6 L355.1 540.5 L355.4 533.8 L355.7 506.1 L356.0 542.3 L356.3 518.1 L356.6 517.6 L356.9 546.0 L357.2 556.7 L357.5 509.3 L357.8 531.8 L358.1 516.1 L358.4 518.6 L358.7 534.4 L359.0 560.5 L359.3 550.5 L359.6 557.8 L359.9 563.3 L360.2 565.5 L360.5 579.5" fill="none" stroke="#000" stroke-width="1" shape-rendering="crispEdges"/><path d="M373.2 550.0 L373.5 499.0 L373.2 501.4 L373.5 539.1 L373.8 531.7 L374.1 533.6 L374.4 521.6 L374.7 488.7 L375.0 522.9 L375.3 502.6 L375.6 488.4 L375.9 500.8 L376.2 503.9 L376.5 475.9 L376.8 483.1 L377.1 496.9 L377.4 491.4 L377.7 490.1 L378.0 497.8 L378.3 491.3 L378.6 474.1 L378.9 479.0 L379.2 486.3 L379.5 481.7 L379.8 489.4 L380.1 479.8 L380.4 474.3 L380.7 498.6 L381.0 477.6 L381.3 494.5 L381.6 496.0 L381.9 500.9 L382.2 490.9 L382.5 484.9 L382.8 464.4 L383.1 469.0 L383.4 482.1 L383.7 477.0 L384.0 489.2 L384.3 474.4 L384.6 503.4 L384.9 496.4 L385.2 489.8 L385.5 494.3 L385.8 465.0 L386.1 479.0 L386.4 501.7 L386.7 470.6 L387.0 479.4 L387.3 481.6 L387.6 485.1 L387.9 492.6 L388.2 483.6 L388.5 472.5 L388.8 472.9 L389.1 479.9 L389.4 484.3 L389.7 457.0 L390.0 497.5 L390.3 477.7 L390.6 479.7 L390.9 467.0 L391.2 494.2 L391.5 466.3 L391.8 494.9 L392.1 497.4 L392.4 490.2 L392.7 471.8 L393.0 483.7 L393.3 515.8 L393.6 502.5 L393.9 517.8 L394.2 515.2 L394.5 494.6 L394.8 489.1 L395.1 466.3 L395.4 458.9 L395.7 485.2 L396.0 462.4 L396.3 472.2 L396.6 471.8 L396.9 474.2 L397.2 481.7 L397.5 470.0 L397.8 464.1 L398.1 483.0 L398.4 477.6 L398.7 474.9 L399.0 487.7 L399.3 468.3 L399.6 492.6 L399.9 478.0 L400.2 475.4 L400.5 482.5 L400.8 481.6 L401.1 500.1 L401.4 481.2 L401.7 496.8 L402.0 481.4 L402.3 486.5 L402.6 502.6 L402.9 490.6 L403.2 474.1 L403.5 502.8 L403.8 492.6 L404.1 497.1 L404.4 490.4 L404.7 501.6 L405.0 500.4 L405.3 480.3 L405.6 480.4 L405.9 501.4 L406.2 488.1 L406.5 484.2 L406.8 480.5 L407.1 485.3 L407.4 493.1 L407.7 487.7 L408.0 482.2 L408.3 498.6 L408.6 490.7 L408.9 491.2 L409.2 481.1 L409.5 497.8 L409.8 486.5 L410.1 490.6 L410.4 487.4 L410.7 475.5 L411.0 479.7 L411.3 493.6 L411.6 466.3 L411.9 477.3 L412.2 486.1 L412.5 477.8 L412.8 472.9 L413.1 477.9 L413.4 479.8 L413.7 486.8 L414.0 474.9 L414.3 484.2 L414.6 479.2 L414.9 481.3 L415.2 472.0 L415.5 472.7 L415.8 478.4 L416.1 492.1 L416.4 477.7 L416.7 483.1 L417.0 498.2 L417.3 501.9 L417.6 495.8 L417.9 481.4 L418.2 479.9 L418.5 488.2 L418.8 486.1 L419.1 496.2 L419.4 498.9 L419.7 479.5 L420.0 480.0 L420.3 494.2 L420.6 497.1 L420.9 494.5 L421.2 485.6 L421.5 491.7 L421.8 490.4 L422.1 492.0 L422.4 481.1 L422.7 488.5 L423.0 502.1 L423.3 492.0 L423.6 485.3 L423.9 495.7 L424.2 499.2 L424.5 503.5 L424.8 503.8 L425.1 495.7 L425.4 497.7 L425.7 503.0 L426.0 507.1 L426.3 493.8 L426.6 486.9 L426.9 496.2 L427.2 494.1 L427.5 494.3 L427.8 495.1 L428.1 494.7 L428.4 501.2 L428.7 498.6 L429.0 496.3 L429.3 511.4 L429.6 495.9 L429.9 503.2 L430.2 506.7 L430.5 510.2 L430.8 495.7 L431.1 507.0 L431.4 502.8 L431.7 503.3 L432.0 492.2 L432.3 516.7 L432.6 497.4 L432.9 493.1 L433.2 509.2 L433.5 498.2 L433.8 499.2 L434.1 499.3 L434.4 505.0 L434.7 505.0 L435.0 504.7 L435.3 503.4 L435.6 497.5 L435.9 513.3 L436.2 514.6 L436.5 498.7 L436.8 499.2 L437.1 512.7 L437.4 504.5 L437.7 509.9 L438.0 509.5 L438.3 506.8 L438.6 507.0 L438.9 512.6 L439.2 513.3 L439.5 516.9 L439.8 496.3 L440.1 498.8 L440.4 494.5 L440.7 517.0 L441.0 505.8 L441.3 495.4 L441.6 499.1 L441.9 485.7 L442.2 524.5 L442.5 513.9 L442.8 501.3 L443.1 509.2 L443.4 500.3 L443.7 493.0 L444.0 494.8 L444.3 507.7 L444.6 511.1 L444.9 514.2 L445.2 514.3 L445.5 485.2 L445.8 498.1 L446.1 495.0 L446.4 508.1 L446.7 505.0 L447.0 502.6 L447.3 501.7 L447.6 496.7 L447.9 502.9 L448.2 490.5 L448.5 509.4 L448.8 495.3 L449.1 489.6 L449.4 489.4 L449.7 492.2 L450.0 497.4 L450.3 491.4 L450.6 488.5 L450.9 508.6 L451.2 492.2 L451.5 490.4 L451.8 507.6 L452.1 495.5 L452.4 512.7 L452.7 487.1 L453.0 517.1 L453.3 508.8 L453.6 502.1 L453.9 489.9 L454.2 508.0 L454.5 504.0 L454.8 505.2 L455.1 489.5 L455.4 497.7 L455.7 503.5 L456.0 494.1 L456.3 489.9 L456.6 506.4 L456.9 480.9 L457.2 496.8 L457.5 499.8 L457.8 488.6 L458.1 503.2 L458.4 476.8 L458.7 482.3 L459.0 486.8 L459.3 497.8 L459.6 477.5 L459.9 504.7 L460.2 485.4 L460.5 479.8 L460.8 484.8 L461.1 491.8 L461.4 482.8 L461.7 490.1 L462.0 507.7 L462.3 493.8 L462.6 497.5 L462.9 515.0 L463.2 486.9 L463.5 489.7 L463.8 493.9 L464.1 495.0 L464.4 495.1 L464.7 519.2 L465.0 493.9 L465.3 512.8 L465.6 509.9 L465.9 506.8 L466.2 516.6 L466.5 495.1 L466.8 512.3 L467.1 512.2 L467.4 519.2 L467.7 518.1 L468.0 520.4 L468.3 500.9 L468.6 501.4 L468.9 524.6 L469.2 516.2 L469.5 501.1 L469.8 524.1 L470.1 522.1 L470.4 532.8 L470.7 523.3 L471.0 510.0 L471.3 528.9 L471.6 513.4 L471.9 524.6 L472.2 502.4 L472.5 508.1 L472.8 499.1 L473.1 515.0 L473.4 498.2 L473.7 509.6 L474.0 498.5 L474.3 505.1 L474.6 501.2 L474.9 511.6 L475.2 498.0 L475.5 515.6 L475.8 496.1 L476.1 509.9 L476.4 489.2 L476.7 493.1 L477.0 515.8 L477.3 516.5 L477.6 502.6 L477.9 503.4 L478.2 505.7 L478.5 496.5 L478.8 511.4 L479.1 492.6 L479.4 510.6 L479.7 516.8 L480.0 510.2 L480.3 506.2 L480.6 501.3 L480.9 517.6 L481.2 493.2 L481.5 515.7 L481.8 513.0 L482.1 505.4 L482.4 523.9 L482.7 524.7 L483.0 500.0 L483.3 500.6 L483.6 508.8 L483.9 512.1 L484.2 511.3 L484.5 528.8 L484.8 525.4 L485.1 528.4 L485.4 537.1 L485.7 517.3 L486.0 532.0 L486.3 505.6 L486.6 541.6 L486.9 531.3 L487.2 531.0 L487.5 517.3 L487.8 541.9 L488.1 535.7 L488.4 535.6 L488.7 519.1 L489.0 544.8 L489.3 534.2 L489.6 517.4 L489.9 502.2 L490.2 506.3 L490.5 535.3 L490.8 507.1 L491.1 517.9 L491.4 526.5 L491.7 532.2 L492.0 534.1 L492.3 517.5 L492.6 496.4 L492.9 527.2 L493.2 494.6 L493.5 520.4 L493.8 528.8 L494.1 508.3 L494.4 513.3 L494.7 526.1 L495.0 518.6 L495.3 498.6 L495.6 506.2 L495.9 504.8 L496.2 491.0 L496.5 521.0 L496.8 508.3 L497.1 520.1 L497.4 517.7 L497.7 499.3 L498.0 522.2 L498.3 491.1 L498.6 514.3 L498.9 492.0 L499.2 503.5 L499.5 502.6 L499.8 476.1 L500.1 499.8 L500.4 501.9 L500.7 513.5 L501.0 490.5 L501.3 513.6 L501.6 490.1 L501.9 503.1 L502.2 486.9 L502.5 501.3 L502.8 496.8 L503.1 483.5 L503.4 496.2 L503.7 507.9 L504.0 511.1 L504.3 499.6 L504.6 492.9 L504.9 502.2 L505.2 473.7 L505.5 495.0 L505.8 485.9 L506.1 489.2 L506.4 498.7 L506.7 481.3 L507.0 485.8 L507.3 476.1 L507.6 512.7 L507.9 504.0 L508.2 473.1 L508.5 495.1 L508.8 511.9 L509.1 469.1 L509.4 500.1 L509.7 482.3 L510.0 494.6 L510.3 503.8 L510.6 472.1 L510.9 453.1 L511.2 503.0 L511.5 504.9 L511.8 509.8 L512.1 475.8 L512.4 476.8 L512.7 479.1 L513.0 489.9 L513.3 486.2 L513.6 492.7 L513.9 501.8 L514.2 486.9 L514.5 502.5 L514.8 522.4 L515.1 508.4 L515.4 506.2 L515.7 515.1 L516.0 507.4 L516.3 500.5 L516.6 522.1 L516.9 510.3 L517.2 533.6 L517.5 495.9 L517.8 533.4 L518.1 503.8 L518.4 501.6 L518.7 501.6 L519.0 493.2 L519.3 538.9 L519.6 529.4 L519.9 521.3 L520.2 528.7 L520.5 522.2 L520.8 548.8 L521.1 529.1 L521.4 546.6 L521.7 552.3 L522.0 549.6 L522.3 528.4 L522.6 563.8" fill="none" stroke="#000" stroke-width="1" shape-rendering="crispEdges"/><path d="M534.4 577.5 L534.7 540.0 L534.4 573.2 L534.7 567.7 L535.0 547.8 L535.3 562.9 L535.6 528.6 L535.9 526.0 L536.2 527.7 L536.5 534.0 L536.8 538.9 L537.1 498.3 L537.4 520.5 L537.7 530.0 L538.0 511.8 L538.3 497.5 L538.6 531.6 L538.9 490.0 L539.2 530.0 L539.5 523.8 L539.8 527.0 L540.1 487.0 L540.4 493.5 L540.7 507.6 L541.0 487.1 L541.3 506.5 L541.6 500.7 L541.9 512.8 L542.2 510.8 L542.5 476.1 L542.8 515.9 L543.1 475.2 L543.4 472.4 L543.7 477.4 L544.0 509.6 L544.3 492.3 L544.6 498.3 L544.9 493.1 L545.2 463.6 L545.5 474.5 L545.8 507.7 L546.1 498.4 L546.4 480.4 L546.7 477.2 L547.0 497.9 L547.3 506.9 L547.6 509.5 L547.9 487.9 L548.2 504.2 L548.5 465.1 L548.8 463.2 L549.1 494.5 L549.4 489.8 L549.7 475.6 L550.0 479.7 L550.3 504.8 L550.6 509.0 L550.9 510.5 L551.2 497.9 L551.5 512.1 L551.8 518.4 L552.1 484.8 L552.4 525.7 L552.7 487.9 L553.0 483.1 L553.3 515.6 L553.6 506.7 L553.9 518.5 L554.2 521.6 L554.5 515.2 L554.8 529.0 L555.1 504.2 L555.4 525.9 L555.7 511.5 L556.0 519.1 L556.3 513.4 L556.6 520.2 L556.9 544.7 L557.2 543.2 L557.5 511.1 L557.8 522.4 L558.1 550.9 L558.4 533.6 L558.7 532.5 L559.0 536.4 L559.3 540.2 L559.6 520.1 L559.9 516.6 L560.2 571.8 L560.5 520.2 L560.8 565.8 L561.1 547.0 L561.4 573.4 L561.7 549.6 L562.0 545.8 L562.3 539.5 L562.6 546.8 L562.9 560.5 L563.2 543.2 L563.5 542.7 L563.8 534.0 L564.1 536.8 L564.4 560.8 L564.7 540.5 L565.0 570.1 L565.3 541.6 L565.6 537.2 L565.9 551.3 L566.2 551.9 L566.5 549.1 L566.8 571.0 L567.1 537.8 L567.4 584.1 L567.7 559.1 L568.0 579.2 L568.3 557.5 L568.6 573.0 L568.9 559.1 L569.2 556.5 L569.5 590.9 L569.8 561.9 L570.1 589.9 L570.4 589.5 L570.7 565.8 L571.0 568.0 L571.3 566.7 L571.6 596.0 L571.9 572.1 L572.2 570.2 L572.5 575.0 L572.8 564.4 L573.1 596.2 L573.4 588.8 L573.7 599.9 L574.0 578.1 L574.3 584.3 L574.6 571.2 L574.9 576.5 L575.2 558.8 L575.5 583.7 L575.8 576.1 L576.1 576.3 L576.4 585.0 L576.7 586.0 L577.0 571.2 L577.3 601.0 L577.6 587.1 L577.9 593.9 L578.2 599.0 L578.5 574.4 L578.8 575.3 L579.1 593.6 L579.4 582.5 L579.7 600.0 L580.0 588.8 L580.3 590.1 L580.6 603.9 L580.9 598.9 L581.2 579.1 L581.5 594.2 L581.8 587.9 L582.1 586.8 L582.4 602.2 L582.7 593.0 L583.0 608.9 L583.3 579.7 L583.6 578.7 L583.9 585.4 L584.2 595.2 L584.5 566.9 L584.8 605.6 L585.1 598.9 L585.4 593.3 L585.7 584.1 L586.0 588.9 L586.3 572.0 L586.6 571.2 L586.9 576.4 L587.2 606.3 L587.5 595.3 L587.8 578.0 L588.1 607.9 L588.4 581.6 L588.7 593.8 L589.0 589.7 L589.3 595.3 L589.6 569.6 L589.9 585.9 L590.2 578.1 L590.5 592.0 L590.8 584.1 L591.1 602.4 L591.4 599.6 L591.7 607.6 L592.0 600.9 L592.3 585.5 L592.6 578.5 L592.9 579.2 L593.2 592.9 L593.5 593.3 L593.8 595.2 L594.1 583.0 L594.4 590.6 L594.7 596.6 L595.0 603.7 L595.3 585.0 L595.6 582.0 L595.9 591.7 L596.2 578.2 L596.5 593.7 L596.8 589.2 L597.1 590.2 L597.4 595.6 L597.7 590.2 L598.0 606.7 L598.3 604.6 L598.6 576.5 L598.9 601.4 L599.2 578.8 L599.5 602.9 L599.8 602.5 L600.1 586.6 L600.4 603.2 L600.7 604.2 L601.0 579.1 L601.3 598.8 L601.6 577.8 L601.9 591.6 L602.2 574.0 L602.5 577.9 L602.8 606.1 L603.1 593.9 L603.4 592.9 L603.7 586.8 L604.0 583.6 L604.3 594.2 L604.6 593.8 L604.9 571.8 L605.2 597.0 L605.5 567.3 L605.8 576.8 L606.1 574.9 L606.4 596.4 L606.7 581.8 L607.0 589.3 L607.3 599.1 L607.6 571.1 L607.9 579.4 L608.2 588.1 L608.5 590.5 L608.8 574.3 L609.1 588.0 L609.4 589.5 L609.7 562.8 L610.0 591.0 L610.3 565.9 L610.6 596.2 L610.9 597.5 L611.2 604.9 L611.5 595.0 L611.8 574.9 L612.1 577.5 L612.4 586.3 L612.7 573.5 L613.0 577.7 L613.3 573.8 L613.6 577.3 L613.9 582.2 L614.2 588.2 L614.5 566.7 L614.8 564.7 L615.1 575.1 L615.4 560.9 L615.7 566.6 L616.0 579.0 L616.3 571.0 L616.6 590.0 L616.9 576.5 L617.2 570.6 L617.5 598.0 L617.8 573.2 L618.1 579.8 L618.4 581.7 L618.7 587.4 L619.0 575.3 L619.3 579.6 L619.6 582.3 L619.9 573.2 L620.2 567.5 L620.5 577.9 L620.8 566.6 L621.1 574.8 L621.4 565.1 L621.7 580.3 L622.0 576.1 L622.3 580.7 L622.6 591.6 L622.9 582.3 L623.2 566.8 L623.5 574.1 L623.8 578.9 L624.1 572.1 L624.4 588.2 L624.7 563.4 L625.0 568.1 L625.3 561.3 L625.6 561.4 L625.9 552.7 L626.2 570.5 L626.5 558.7 L626.8 566.7 L627.1 577.8 L627.4 579.0 L627.7 561.1 L628.0 567.3 L628.3 557.6 L628.6 558.2 L628.9 564.3 L629.2 553.5 L629.5 569.0 L629.8 564.5 L630.1 559.0 L630.4 557.4 L630.7 561.5 L631.0 548.6 L631.3 549.4 L631.6 558.8 L631.9 547.1 L632.2 548.0 L632.5 574.2 L632.8 572.8 L633.1 552.1 L633.4 553.3 L633.7 547.3 L634.0 540.6 L634.3 544.2 L634.6 546.5 L634.9 554.3 L635.2 550.8 L635.5 537.7 L635.8 552.3 L636.1 566.2 L636.4 549.1 L636.7 553.3 L637.0 540.4 L637.3 532.3 L637.6 554.5 L637.9 545.6 L638.2 560.5 L638.5 529.7 L638.8 532.6 L639.1 549.3 L639.4 547.1 L639.7 557.6 L640.0 553.1 L640.3 537.0 L640.6 528.5 L640.9 557.8 L641.2 526.7 L641.5 537.4 L641.8 548.2 L642.1 567.2 L642.4 573.0 L642.7 555.7 L643.0 555.1 L643.3 560.3 L643.6 581.0 L643.9 564.8 L644.2 565.6 L644.5 571.1 L644.8 545.8 L645.1 552.7 L645.4 584.5 L645.7 585.8 L646.0 553.7 L646.3 565.0 L646.6 561.6 L646.9 586.9 L647.2 570.5 L647.5 571.6 L647.8 561.1 L648.1 555.4 L648.4 584.6 L648.7 552.9 L649.0 568.9 L649.3 579.9 L649.6 561.0 L649.9 552.1 L650.2 571.3 L650.5 584.6 L650.8 579.0 L651.1 554.5 L651.4 587.0 L651.7 579.5 L652.0 583.9 L652.3 587.3 L652.6 571.7 L652.9 583.5 L653.2 586.6 L653.5 585.1 L653.8 564.4 L654.1 571.7 L654.4 537.0 L654.7 573.2 L655.0 574.8 L655.3 566.4 L655.6 568.6 L655.9 573.8 L656.2 554.3 L656.5 539.9 L656.8 547.9 L657.1 560.9 L657.4 540.3 L657.7 546.2 L658.0 563.4 L658.3 544.5 L658.6 531.1 L658.9 564.3 L659.2 535.5 L659.5 566.1 L659.8 540.6 L660.1 543.4 L660.4 540.3 L660.7 550.9 L661.0 550.5 L661.3 553.6 L661.6 514.4 L661.9 519.2 L662.2 515.7 L662.5 522.7 L662.8 516.4 L663.1 532.6 L663.4 531.9 L663.7 552.2 L664.0 554.6 L664.3 544.0 L664.6 528.4 L664.9 528.2 L665.2 512.9 L665.5 525.4 L665.8 510.2 L666.1 542.7 L666.4 513.4 L666.7 501.5 L667.0 502.0 L667.3 523.8 L667.6 515.6 L667.9 512.0 L668.2 508.3 L668.5 540.3 L668.8 496.2 L669.1 520.3 L669.4 513.9 L669.7 537.3 L670.0 537.8 L670.3 507.7 L670.6 531.6 L670.9 500.5 L671.2 533.1 L671.5 533.2 L671.8 538.5 L672.1 519.0 L672.4 504.1 L672.7 496.2 L673.0 504.2 L673.3 524.0 L673.6 510.3 L673.9 521.8 L674.2 531.8 L674.5 502.4 L674.8 515.2 L675.1 502.3 L675.4 501.0 L675.7 490.1 L676.0 529.8 L676.3 519.9 L676.6 503.3 L676.9 486.9 L677.2 530.4 L677.5 528.8 L677.8 498.1 L678.1 522.4 L678.4 504.2 L678.7 515.3 L679.0 503.8 L679.3 531.6 L679.6 527.7 L679.9 522.5 L680.2 537.6 L680.5 545.5 L680.8 514.3 L681.1 558.3 L681.4 554.7 L681.7 521.5 L682.0 517.2 L682.3 557.0 L682.6 536.3 L682.9 554.7 L683.2 544.4 L683.5 545.9 L683.8 545.4 L684.1 578.5 L684.4 552.6 L684.7 583.4 L684.8 585.4" fill="none" stroke="#000" stroke-width="1" shape-rendering="crispEdges"/><path d="M232.7 473.4 L232.7 454.7 M236.0 486.4 L236.0 462.0 M247.0 523.8 L247.0 536.0 M316.2 561.8 L316.2 578.5 M336.0 479.3 L336.0 458.7 M351.6 496.8 L351.6 520.0 M388.9 471.4 L388.9 447.9 M396.4 469.0 L396.4 447.0 M394.0 497.6 L394.0 519.0 M412.0 479.1 L412.0 466.0 M464.6 504.8 L464.6 520.0 M488.2 536.4 L488.2 558.0 M510.8 481.4 L510.8 457.7 M543.0 492.9 L543.0 468.0 M549.0 485.3 L549.0 462.0 M599.3 593.5 L599.3 613.0 M639.6 532.4 L639.6 514.7 M670.0 510.0 L670.0 595.0 M667.0 521.9 L667.0 491.0 M681.0 524.8 L681.0 487.0 M676.0 513.5 L676.0 488.0 M590.0 590.1 L590.0 605.0 M575.0 584.1 L575.0 603.0" fill="none" stroke="#000" stroke-width="1" shape-rendering="crispEdges"/><path d="M219.5 440.5 L688.5 440.5 L688.5 621.5 L219.5 621.5 Z" fill="none" stroke="#000" stroke-width="1"/><path d="M220.5 622 L220.5 627" stroke="#000" stroke-width="1"/><path d="M238.5 622 L238.5 633" stroke="#000" stroke-width="1"/><path d="M256.5 622 L256.5 627" stroke="#000" stroke-width="1"/><path d="M274.5 622 L274.5 627" stroke="#000" stroke-width="1"/><path d="M292.5 622 L292.5 627" stroke="#000" stroke-width="1"/><path d="M310.5 622 L310.5 627" stroke="#000" stroke-width="1"/><path d="M328.5 622 L328.5 627" stroke="#000" stroke-width="1"/><path d="M346.5 622 L346.5 627" stroke="#000" stroke-width="1"/><path d="M364.5 622 L364.5 627" stroke="#000" stroke-width="1"/><path d="M382.5 622 L382.5 627" stroke="#000" stroke-width="1"/><path d="M400.5 622 L400.5 627" stroke="#000" stroke-width="1"/><path d="M418.5 622 L418.5 627" stroke="#000" stroke-width="1"/><path d="M436.5 622 L436.5 627" stroke="#000" stroke-width="1"/><path d="M454.5 622 L454.5 633" stroke="#000" stroke-width="1"/><path d="M472.5 622 L472.5 627" stroke="#000" stroke-width="1"/><path d="M490.5 622 L490.5 627" stroke="#000" stroke-width="1"/><path d="M508.5 622 L508.5 627" stroke="#000" stroke-width="1"/><path d="M526.5 622 L526.5 627" stroke="#000" stroke-width="1"/><path d="M544.5 622 L544.5 627" stroke="#000" stroke-width="1"/><path d="M562.5 622 L562.5 627" stroke="#000" stroke-width="1"/><path d="M580.5 622 L580.5 627" stroke="#000" stroke-width="1"/><path d="M598.5 622 L598.5 627" stroke="#000" stroke-width="1"/><path d="M616.5 622 L616.5 627" stroke="#000" stroke-width="1"/><path d="M634.5 622 L634.5 627" stroke="#000" stroke-width="1"/><path d="M652.5 622 L652.5 627" stroke="#000" stroke-width="1"/><path d="M670.5 622 L670.5 633" stroke="#000" stroke-width="1"/><path d="M688.5 622 L688.5 627" stroke="#000" stroke-width="1"/><path d="M214 620.5 L219 620.5" stroke="#000" stroke-width="1"/><path d="M208 599.5 L219 599.5" stroke="#000" stroke-width="1"/><text x="203.5" y="604.6" font-size="16.4" text-anchor="end" letter-spacing="1.0" >1.2</text><path d="M214 580.5 L219 580.5" stroke="#000" stroke-width="1"/><path d="M208 562.5 L219 562.5" stroke="#000" stroke-width="1"/><text x="203.5" y="567.6" font-size="16.4" text-anchor="end" letter-spacing="1.0" >1.4</text><path d="M214 545.5 L219 545.5" stroke="#000" stroke-width="1"/><path d="M208 529.5 L219 529.5" stroke="#000" stroke-width="1"/><text x="203.5" y="534.6" font-size="16.4" text-anchor="end" letter-spacing="1.0" >1.6</text><path d="M214 514.5 L219 514.5" stroke="#000" stroke-width="1"/><path d="M208 500.5 L219 500.5" stroke="#000" stroke-width="1"/><text x="203.5" y="505.6" font-size="16.4" text-anchor="end" letter-spacing="1.0" >1.8</text><path d="M214 487.5 L219 487.5" stroke="#000" stroke-width="1"/><path d="M208 475.5 L219 475.5" stroke="#000" stroke-width="1"/><text x="203.5" y="480.6" font-size="16.4" text-anchor="end" letter-spacing="1.0" >2.0</text><path d="M214 463.5 L219 463.5" stroke="#000" stroke-width="1"/><path d="M208 452.5 L219 452.5" stroke="#000" stroke-width="1"/><text x="203.5" y="457.6" font-size="16.4" text-anchor="end" letter-spacing="1.0" >2.2</text><path d="M214 441.5 L219 441.5" stroke="#000" stroke-width="1"/><text x="0" y="0" font-size="16.4" text-anchor="middle" letter-spacing="0.6" transform="translate(167,531) rotate(-90)">e Tperp/Tpar</text><text x="263" y="652.6" font-size="16.4" text-anchor="end" letter-spacing="1.0" >00:00</text><text x="263" y="672.6" font-size="16.4" text-anchor="end" letter-spacing="1.0" >4.225</text><text x="263" y="692.6" font-size="16.4" text-anchor="end" letter-spacing="1.0" >-10.580</text><text x="263" y="712.6" font-size="16.4" text-anchor="end" letter-spacing="1.0" >2.247</text><text x="263" y="732.6" font-size="16.4" text-anchor="end" letter-spacing="1.0" >4.373</text><text x="479.5" y="652.6" font-size="16.4" text-anchor="end" letter-spacing="1.0" >12:00</text><text x="479.5" y="672.6" font-size="16.4" text-anchor="end" letter-spacing="1.0" >5.756</text><text x="479.5" y="692.6" font-size="16.4" text-anchor="end" letter-spacing="1.0" >-1.544</text><text x="479.5" y="712.6" font-size="16.4" text-anchor="end" letter-spacing="1.0" >5.398</text><text x="479.5" y="732.6" font-size="16.4" text-anchor="end" letter-spacing="1.0" >5.760</text><text x="695" y="652.6" font-size="16.4" text-anchor="end" letter-spacing="1.0" >00:00</text><text x="695" y="672.6" font-size="16.4" text-anchor="end" letter-spacing="1.0" >3.179</text><text x="695" y="692.6" font-size="16.4" text-anchor="end" letter-spacing="1.0" >-16.190</text><text x="695" y="712.6" font-size="16.4" text-anchor="end" letter-spacing="1.0" >8.125</text><text x="695" y="732.6" font-size="16.4" text-anchor="end" letter-spacing="1.0" >3.447</text><text x="167.5" y="672.6" font-size="16.4" text-anchor="end" letter-spacing="0" >R</text><text x="168.5" y="677.6" font-size="10.5" text-anchor="start" letter-spacing="0" >E</text><text x="174.5" y="692.5" font-size="16.4" text-anchor="end" letter-spacing="0.1" >MLat</text><text x="175" y="712.8" font-size="16.4" text-anchor="end" letter-spacing="0.1" >MLT</text><text x="174.5" y="733" font-size="16.4" text-anchor="end" letter-spacing="0" >L</text><text x="455" y="756.8" font-size="16.4" text-anchor="middle" letter-spacing="0.83" >2012-12-01 (336) 23:00 to 2012-12-03 (338) 01:00</text></svg><div class="a" style="left:346px;top:358px;width:246px;height:89px;border:1px solid #8a8a8a;border-radius:5px 5px 0 0;background:#d8d8d8;overflow:hidden"><div class="a" style="left:0;top:0;width:244px;height:25px;background:linear-gradient(#f2f2f2,#e4e4e4 30%,#d3d3d3)"></div><div class="a" style="left:2px;top:25px;width:240px;height:61px;background:#fcfcfc"></div></div><svg class="a" style="left:0;top:0" width="700" height="460"><path d="M359.5 369 L368.5 369 L364 374.5 Z" fill="#9a9a9a"/><path d="M569.5 369 L576.5 376.5 M576.5 369 L569.5 376.5" stroke="#a2a2a2" stroke-width="2.2"/><rect x="349.5" y="411.5" width="219" height="19" fill="#eeeeee" stroke="#7b8b9a" stroke-width="1"/><path d="M349.5 431 L349.5 411.5 L568.5 411.5" fill="none" stroke="#6a88c2" stroke-width="1"/><rect x="351" y="413" width="80" height="17" fill="#a3b6cc"/><rect x="569.5" y="411.5" width="19" height="19" fill="#dfe8f2" stroke="#7b8b9a" stroke-width="1"/><rect x="572.5" y="414.5" width="13.5" height="13.5" rx="2.5" fill="#e0404a" stroke="#b8202a" stroke-width="1"/><path d="M575.8 417.8 L582.7 424.7 M582.7 417.8 L575.8 424.7" stroke="#fff" stroke-width="2.2"/></svg><div class="a" style="left:411.5px;top:365.3px;font-size:13.6px;font-weight:bold;color:#6e6e6e;letter-spacing:0.15px;white-space:pre;line-height:16px">Progress Monitor</div><div class="a" style="left:414px;top:383.5px;font-size:15px;color:#1a1a1a;-webkit-text-stroke:0.35px #1a1a1a;letter-spacing:1.55px;white-space:pre;line-height:17px">running batch</div><div class="a" style="left:363px;top:400.3px;font-size:9.6px;font-weight:bold;color:#111;letter-spacing:0.08px;white-space:pre;line-height:11px">write /hom...walk3/product_2012 12 12_00.png</div><div class="a" style="left:376px;top:429px;font-size:13px;font-weight:bold;color:#222;letter-spacing:0.85px;white-space:pre;line-height:16px">23/62 (51.5/min, eta 46.6 s)</div></body></html>
